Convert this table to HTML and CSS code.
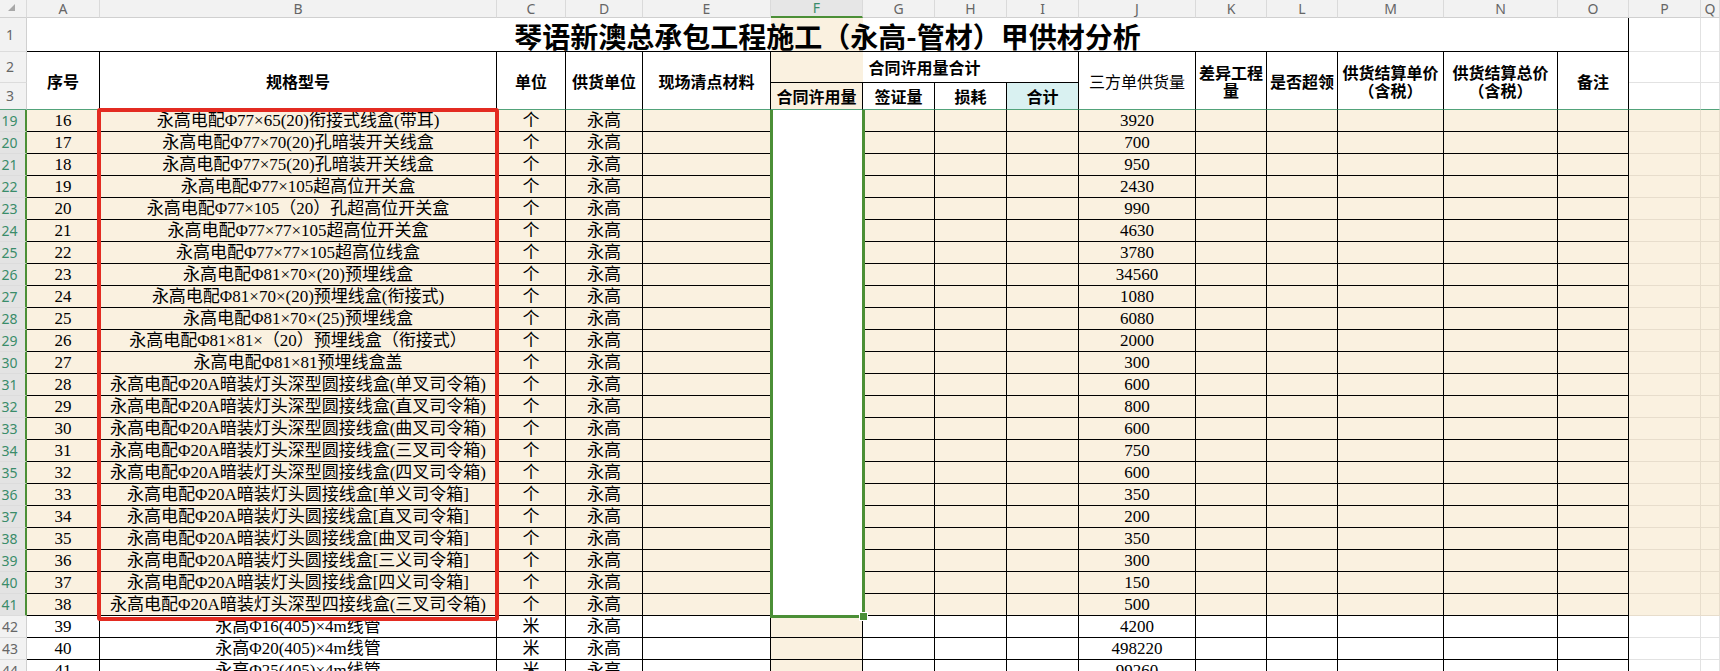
FILE: index.html
```html
<!DOCTYPE html>
<html lang="zh-CN">
<head>
<meta charset="utf-8">
<title>琴语新澳总承包工程施工（永高-管材）甲供材分析</title>
<link rel="stylesheet" href="styles.css">
</head>
<body>
<div class="sheet">
  <!-- column headers -->
  <div class="ch corner"><svg width="7" height="7" viewBox="0 0 7 7"><polygon points="7,0 7,7 0,7" fill="#a8a8a8"/></svg></div>
  <div class="ch">A</div><div class="ch">B</div><div class="ch">C</div><div class="ch">D</div><div class="ch">E</div>
  <div class="ch on">F</div><div class="ch">G</div><div class="ch">H</div><div class="ch">I</div><div class="ch">J</div>
  <div class="ch">K</div><div class="ch">L</div><div class="ch">M</div><div class="ch">N</div><div class="ch">O</div>
  <div class="ch">P</div><div class="ch">Q</div>

  <!-- row 1 -->
  <div class="rh">1</div>
  <div class="title">琴语新澳总承包工程施工（永高-管材）甲供材分析</div>
  <div class="g"></div><div class="g"></div>

  <!-- row 2 -->
  <div class="rh">2</div>
  <div class="c h r2 fz"><span>序号</span></div>
  <div class="c h r2 fz"><span>规格型号</span></div>
  <div class="c h r2 fz"><span>单位</span></div>
  <div class="c h r2 fz"><span>供货单位</span></div>
  <div class="c h r2 fz"><span>现场清点材料</span></div>
  <div class="c h c4 fsum"><span>合同许用量合计</span></div>
  <div class="c h r2 fz thin"><span>三方单供货量</span></div>
  <div class="c h r2 fz"><span>差异工程<br>量</span></div>
  <div class="c h r2 fz"><span>是否超领</span></div>
  <div class="c h r2 fz"><span>供货结算单价<br>（含税）</span></div>
  <div class="c h r2 fz"><span>供货结算总价<br>（含税）</span></div>
  <div class="c h r2 fz"><span>备注</span></div>
  <div class="g"></div><div class="g"></div>

  <!-- row 3 -->
  <div class="rh fz">3</div>
  <div class="c h b fz"><span>合同许用量</span></div>
  <div class="c h fz"><span>签证量</span></div>
  <div class="c h fz"><span>损耗</span></div>
  <div class="c h cy fz"><span>合计</span></div>
  <div class="g fz"></div><div class="g fz"></div>

  <!-- row 19 -->
  <div class="rh s">19</div><div class="c b">16</div><div class="c b">永高电配Φ77×65(20)衔接式线盒(带耳)</div><div class="c b">个</div><div class="c b">永高</div><div class="c b"></div>
  <div class="sel"></div>
  <div class="c b"></div><div class="c b"></div><div class="c b"></div><div class="c b">3920</div><div class="c b"></div><div class="c b"></div><div class="c b"></div><div class="c b"></div><div class="c b"></div><div class="g b"></div><div class="g b"></div>

  <div class="rh s">20</div><div class="c b">17</div><div class="c b">永高电配Φ77×70(20)孔暗装开关线盒</div><div class="c b">个</div><div class="c b">永高</div><div class="c b"></div>
  <div class="c b"></div><div class="c b"></div><div class="c b"></div><div class="c b">700</div><div class="c b"></div><div class="c b"></div><div class="c b"></div><div class="c b"></div><div class="c b"></div><div class="g b"></div><div class="g b"></div>

  <div class="rh s">21</div><div class="c b">18</div><div class="c b">永高电配Φ77×75(20)孔暗装开关线盒</div><div class="c b">个</div><div class="c b">永高</div><div class="c b"></div>
  <div class="c b"></div><div class="c b"></div><div class="c b"></div><div class="c b">950</div><div class="c b"></div><div class="c b"></div><div class="c b"></div><div class="c b"></div><div class="c b"></div><div class="g b"></div><div class="g b"></div>

  <div class="rh s">22</div><div class="c b">19</div><div class="c b">永高电配Φ77×105超高位开关盒</div><div class="c b">个</div><div class="c b">永高</div><div class="c b"></div>
  <div class="c b"></div><div class="c b"></div><div class="c b"></div><div class="c b">2430</div><div class="c b"></div><div class="c b"></div><div class="c b"></div><div class="c b"></div><div class="c b"></div><div class="g b"></div><div class="g b"></div>

  <div class="rh s">23</div><div class="c b">20</div><div class="c b">永高电配Φ77×105（20）孔超高位开关盒</div><div class="c b">个</div><div class="c b">永高</div><div class="c b"></div>
  <div class="c b"></div><div class="c b"></div><div class="c b"></div><div class="c b">990</div><div class="c b"></div><div class="c b"></div><div class="c b"></div><div class="c b"></div><div class="c b"></div><div class="g b"></div><div class="g b"></div>

  <div class="rh s">24</div><div class="c b">21</div><div class="c b">永高电配Φ77×77×105超高位开关盒</div><div class="c b">个</div><div class="c b">永高</div><div class="c b"></div>
  <div class="c b"></div><div class="c b"></div><div class="c b"></div><div class="c b">4630</div><div class="c b"></div><div class="c b"></div><div class="c b"></div><div class="c b"></div><div class="c b"></div><div class="g b"></div><div class="g b"></div>

  <div class="rh s">25</div><div class="c b">22</div><div class="c b">永高电配Φ77×77×105超高位线盒</div><div class="c b">个</div><div class="c b">永高</div><div class="c b"></div>
  <div class="c b"></div><div class="c b"></div><div class="c b"></div><div class="c b">3780</div><div class="c b"></div><div class="c b"></div><div class="c b"></div><div class="c b"></div><div class="c b"></div><div class="g b"></div><div class="g b"></div>

  <div class="rh s">26</div><div class="c b">23</div><div class="c b">永高电配Φ81×70×(20)预埋线盒</div><div class="c b">个</div><div class="c b">永高</div><div class="c b"></div>
  <div class="c b"></div><div class="c b"></div><div class="c b"></div><div class="c b">34560</div><div class="c b"></div><div class="c b"></div><div class="c b"></div><div class="c b"></div><div class="c b"></div><div class="g b"></div><div class="g b"></div>

  <div class="rh s">27</div><div class="c b">24</div><div class="c b">永高电配Φ81×70×(20)预埋线盒(衔接式)</div><div class="c b">个</div><div class="c b">永高</div><div class="c b"></div>
  <div class="c b"></div><div class="c b"></div><div class="c b"></div><div class="c b">1080</div><div class="c b"></div><div class="c b"></div><div class="c b"></div><div class="c b"></div><div class="c b"></div><div class="g b"></div><div class="g b"></div>

  <div class="rh s">28</div><div class="c b">25</div><div class="c b">永高电配Φ81×70×(25)预埋线盒</div><div class="c b">个</div><div class="c b">永高</div><div class="c b"></div>
  <div class="c b"></div><div class="c b"></div><div class="c b"></div><div class="c b">6080</div><div class="c b"></div><div class="c b"></div><div class="c b"></div><div class="c b"></div><div class="c b"></div><div class="g b"></div><div class="g b"></div>

  <div class="rh s">29</div><div class="c b">26</div><div class="c b">永高电配Φ81×81×（20）预埋线盒（衔接式）</div><div class="c b">个</div><div class="c b">永高</div><div class="c b"></div>
  <div class="c b"></div><div class="c b"></div><div class="c b"></div><div class="c b">2000</div><div class="c b"></div><div class="c b"></div><div class="c b"></div><div class="c b"></div><div class="c b"></div><div class="g b"></div><div class="g b"></div>

  <div class="rh s">30</div><div class="c b">27</div><div class="c b">永高电配Φ81×81预埋线盒盖</div><div class="c b">个</div><div class="c b">永高</div><div class="c b"></div>
  <div class="c b"></div><div class="c b"></div><div class="c b"></div><div class="c b">300</div><div class="c b"></div><div class="c b"></div><div class="c b"></div><div class="c b"></div><div class="c b"></div><div class="g b"></div><div class="g b"></div>

  <div class="rh s">31</div><div class="c b">28</div><div class="c b">永高电配Φ20A暗装灯头深型圆接线盒(单叉司令箱)</div><div class="c b">个</div><div class="c b">永高</div><div class="c b"></div>
  <div class="c b"></div><div class="c b"></div><div class="c b"></div><div class="c b">600</div><div class="c b"></div><div class="c b"></div><div class="c b"></div><div class="c b"></div><div class="c b"></div><div class="g b"></div><div class="g b"></div>

  <div class="rh s">32</div><div class="c b">29</div><div class="c b">永高电配Φ20A暗装灯头深型圆接线盒(直叉司令箱)</div><div class="c b">个</div><div class="c b">永高</div><div class="c b"></div>
  <div class="c b"></div><div class="c b"></div><div class="c b"></div><div class="c b">800</div><div class="c b"></div><div class="c b"></div><div class="c b"></div><div class="c b"></div><div class="c b"></div><div class="g b"></div><div class="g b"></div>

  <div class="rh s">33</div><div class="c b">30</div><div class="c b">永高电配Φ20A暗装灯头深型圆接线盒(曲叉司令箱)</div><div class="c b">个</div><div class="c b">永高</div><div class="c b"></div>
  <div class="c b"></div><div class="c b"></div><div class="c b"></div><div class="c b">600</div><div class="c b"></div><div class="c b"></div><div class="c b"></div><div class="c b"></div><div class="c b"></div><div class="g b"></div><div class="g b"></div>

  <div class="rh s">34</div><div class="c b">31</div><div class="c b">永高电配Φ20A暗装灯头深型圆接线盒(三叉司令箱)</div><div class="c b">个</div><div class="c b">永高</div><div class="c b"></div>
  <div class="c b"></div><div class="c b"></div><div class="c b"></div><div class="c b">750</div><div class="c b"></div><div class="c b"></div><div class="c b"></div><div class="c b"></div><div class="c b"></div><div class="g b"></div><div class="g b"></div>

  <div class="rh s">35</div><div class="c b">32</div><div class="c b">永高电配Φ20A暗装灯头深型圆接线盒(四叉司令箱)</div><div class="c b">个</div><div class="c b">永高</div><div class="c b"></div>
  <div class="c b"></div><div class="c b"></div><div class="c b"></div><div class="c b">600</div><div class="c b"></div><div class="c b"></div><div class="c b"></div><div class="c b"></div><div class="c b"></div><div class="g b"></div><div class="g b"></div>

  <div class="rh s">36</div><div class="c b">33</div><div class="c b">永高电配Φ20A暗装灯头圆接线盒[单义司令箱]</div><div class="c b">个</div><div class="c b">永高</div><div class="c b"></div>
  <div class="c b"></div><div class="c b"></div><div class="c b"></div><div class="c b">350</div><div class="c b"></div><div class="c b"></div><div class="c b"></div><div class="c b"></div><div class="c b"></div><div class="g b"></div><div class="g b"></div>

  <div class="rh s">37</div><div class="c b">34</div><div class="c b">永高电配Φ20A暗装灯头圆接线盒[直叉司令箱]</div><div class="c b">个</div><div class="c b">永高</div><div class="c b"></div>
  <div class="c b"></div><div class="c b"></div><div class="c b"></div><div class="c b">200</div><div class="c b"></div><div class="c b"></div><div class="c b"></div><div class="c b"></div><div class="c b"></div><div class="g b"></div><div class="g b"></div>

  <div class="rh s">38</div><div class="c b">35</div><div class="c b">永高电配Φ20A暗装灯头圆接线盒[曲叉司令箱]</div><div class="c b">个</div><div class="c b">永高</div><div class="c b"></div>
  <div class="c b"></div><div class="c b"></div><div class="c b"></div><div class="c b">350</div><div class="c b"></div><div class="c b"></div><div class="c b"></div><div class="c b"></div><div class="c b"></div><div class="g b"></div><div class="g b"></div>

  <div class="rh s">39</div><div class="c b">36</div><div class="c b">永高电配Φ20A暗装灯头圆接线盒[三义司令箱]</div><div class="c b">个</div><div class="c b">永高</div><div class="c b"></div>
  <div class="c b"></div><div class="c b"></div><div class="c b"></div><div class="c b">300</div><div class="c b"></div><div class="c b"></div><div class="c b"></div><div class="c b"></div><div class="c b"></div><div class="g b"></div><div class="g b"></div>

  <div class="rh s">40</div><div class="c b">37</div><div class="c b">永高电配Φ20A暗装灯头圆接线盒[四义司令箱]</div><div class="c b">个</div><div class="c b">永高</div><div class="c b"></div>
  <div class="c b"></div><div class="c b"></div><div class="c b"></div><div class="c b">150</div><div class="c b"></div><div class="c b"></div><div class="c b"></div><div class="c b"></div><div class="c b"></div><div class="g b"></div><div class="g b"></div>

  <div class="rh s">41</div><div class="c b">38</div><div class="c b">永高电配Φ20A暗装灯头深型四接线盒(三叉司令箱)</div><div class="c b">个</div><div class="c b">永高</div><div class="c b"></div>
  <div class="c b"></div><div class="c b"></div><div class="c b"></div><div class="c b">500</div><div class="c b"></div><div class="c b"></div><div class="c b"></div><div class="c b"></div><div class="c b"></div><div class="g b"></div><div class="g b"></div>

  <!-- rows 42-44 -->
  <div class="rh">42</div><div class="c">39</div><div class="c">永高Φ16(405)×4m线管</div><div class="c">米</div><div class="c">永高</div><div class="c"></div><div class="c b"></div>
  <div class="c"></div><div class="c"></div><div class="c"></div><div class="c">4200</div><div class="c"></div><div class="c"></div><div class="c"></div><div class="c"></div><div class="c"></div><div class="g"></div><div class="g"></div>

  <div class="rh">43</div><div class="c">40</div><div class="c">永高Φ20(405)×4m线管</div><div class="c">米</div><div class="c">永高</div><div class="c"></div><div class="c b"></div>
  <div class="c"></div><div class="c"></div><div class="c"></div><div class="c">498220</div><div class="c"></div><div class="c"></div><div class="c"></div><div class="c"></div><div class="c"></div><div class="g"></div><div class="g"></div>

  <div class="rh">44</div><div class="c">41</div><div class="c">永高Φ25(405)×4m线管</div><div class="c">米</div><div class="c">永高</div><div class="c"></div><div class="c b"></div>
  <div class="c"></div><div class="c"></div><div class="c"></div><div class="c">99260</div><div class="c"></div><div class="c"></div><div class="c"></div><div class="c"></div><div class="c"></div><div class="g"></div><div class="g"></div>

  <div class="mark"></div>
</div>
</body>
</html>
```

FILE: styles.css
```css
* { box-sizing: border-box; margin: 0; padding: 0; }

html, body {
  width: 1720px;
  height: 671px;
  overflow: hidden;
  background: #ffffff;
}

.sheet {
  position: relative;
  display: grid;
  grid-template-columns: 27px 73px 397px 69px 77px 128px 92px 72px 72px 72px 117px 71px 71px 106px 114px 71px 72px 1fr;
  grid-template-rows: 18px 34px 31px 27px repeat(26, 22px);
  font-family: "Liberation Serif", "Noto Sans CJK SC", serif;
  font-size: 17px;
  line-height: 20px;
  color: #000;
}

.sheet > div {
  display: flex;
  align-items: center;
  justify-content: center;
  white-space: nowrap;
  overflow: hidden;
}

/* column headers */
.ch {
  background: #f2f2f2;
  border-right: 1px solid #dadada;
  border-bottom: 1px solid #d0d0d0;
  font-family: "Noto Sans", "Liberation Sans", sans-serif;
  font-size: 14px;
  line-height: 16px;
  color: #666;
}
.ch.on {
  background: #e6e6e6;
  color: #3a8c6a;
  border-bottom: 2px solid #4b8f36;
}
.sheet > .corner {
  justify-content: flex-start;
  align-items: flex-start;
  padding: 4px 0 0 8px;
}

/* row headers */
.rh {
  background: #f2f2f2;
  border-right: 1px solid #d0d0d0;
  border-bottom: 1px solid #dcdcdc;
  font-family: "Noto Sans", "Liberation Sans", sans-serif;
  font-size: 14px;
  line-height: 18px;
  color: #666;
  padding-right: 6px;
}
.rh.s {
  background: #e3e3e3;
  color: #3a8c6a;
  border-right: 2px solid #4b8f36;
}

/* cells */
.c {
  border-right: 1px solid #000;
  border-bottom: 1px solid #000;
}
.b { background: #faf1e0; }
.cy { background: #d9f1f1; }

.g {
  border-right: 1px solid #e2e2e2;
  border-bottom: 1px solid #e2e2e2;
}
.g.b { border-color: #e7ddcc; }

.fz { border-bottom-color: #52a37a; }

.r2 { grid-row: span 2; }
.c4 { grid-column: span 4; }

.h {
  font-family: "Noto Sans CJK SC", sans-serif;
  font-weight: 700;
  font-size: 16px;
  line-height: 18px;
}
.h span {
  display: block;
  text-align: center;
  white-space: nowrap;
}
.h.thin { font-weight: 400; font-size: 16px; }

.fsum {
  background: linear-gradient(to right, #faf1e0 0, #faf1e0 92px, #ffffff 92px);
}

.title {
  grid-column: span 15;
  font-family: "Noto Sans CJK SC", sans-serif;
  font-weight: 700;
  font-size: 28px;
  line-height: 30px;
  padding-top: 2px;
  border-right: 1px solid #000;
  border-bottom: 1px solid #000;
  background: linear-gradient(to right, #ffffff 744px, #faf1e0 744px, #faf1e0 836px, #ffffff 836px);
}

/* selected range F19:F41 */
.sheet > .sel {
  grid-row: span 23;
  background: #ffffff;
  position: relative;
  overflow: visible;
}
.sel::after {
  content: "";
  position: absolute;
  left: -1px;
  right: -2px;
  top: 0;
  bottom: -2px;
  border: 3px solid #4b8f36;
  border-top: 0;
  z-index: 3;
}
.sel::before {
  content: "";
  position: absolute;
  right: -5px;
  bottom: -5px;
  width: 7px;
  height: 7px;
  background: #4b8f36;
  border: 1px solid #ffffff;
  z-index: 4;
}

/* red highlight box */
.sheet > .mark {
  position: absolute;
  left: 97px;
  top: 108px;
  width: 402px;
  height: 513px;
  border: 4px solid #e32b21;
  border-radius: 3px;
  z-index: 5;
  pointer-events: none;
}
```
